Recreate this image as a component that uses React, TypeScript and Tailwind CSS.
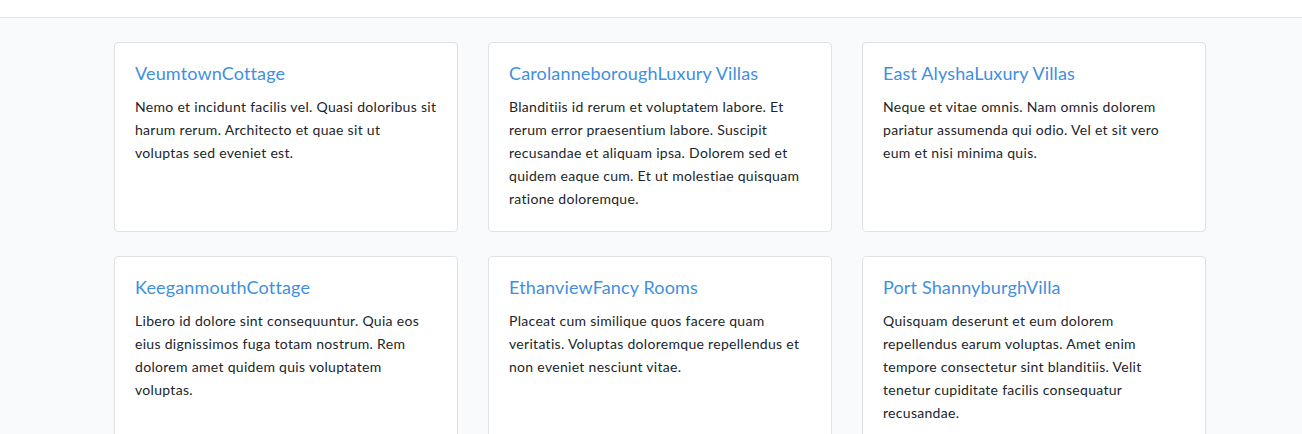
import React from 'react';

interface Place { title: string; body: string }

const places: Place[] = [
  { title: 'VeumtownCottage', body: 'Nemo et incidunt facilis vel. Quasi doloribus sit harum rerum. Architecto et quae sit ut voluptas sed eveniet est.' },
  { title: 'CarolanneboroughLuxury Villas', body: 'Blanditiis id rerum et voluptatem labore. Et rerum error praesentium labore. Suscipit recusandae et aliquam ipsa. Dolorem sed et quidem eaque cum. Et ut molestiae quisquam ratione doloremque.' },
  { title: 'East AlyshaLuxury Villas', body: 'Neque et vitae omnis. Nam omnis dolorem pariatur assumenda qui odio. Vel et sit vero eum et nisi minima quis.' },
  { title: 'KeeganmouthCottage', body: 'Libero id dolore sint consequuntur. Quia eos eius dignissimos fuga totam nostrum. Rem dolorem amet quidem quis voluptatem voluptas.' },
  { title: 'EthanviewFancy Rooms', body: 'Placeat cum similique quos facere quam veritatis. Voluptas doloremque repellendus et non eveniet nesciunt vitae.' },
  { title: 'Port ShannyburghVilla', body: 'Quisquam deserunt et eum dolorem repellendus earum voluptas. Amet enim tempore consectetur sint blanditiis. Velit tenetur cupiditate facilis consequatur recusandae.' },
];

export default function App() {
  return (
    <div className="min-h-screen bg-[#f8fafc] font-['Lato','Noto_Sans',sans-serif] text-[#212529]">
      <div className="h-[18px] bg-white border-b border-[#e3e5e8]" />
      <main className="pt-6 pl-[114px]">
        <div className="grid grid-cols-[344px_344px_344px] gap-x-[30px] gap-y-6">
          {places.map((p, i) => (
            <div key={i} className="bg-white border border-[#dfe1e4] rounded px-5 pt-5 pb-5 min-h-[190px]">
              <h5 className="text-[18px] leading-[1.2] tracking-[0.15px] text-[#3f8fe0] mb-2.5">{p.title}</h5>
              <p className="text-[14px] leading-[23px] tracking-[0.3px]">{p.body}</p>
            </div>
          ))}
        </div>
      </main>
    </div>
  );
}
